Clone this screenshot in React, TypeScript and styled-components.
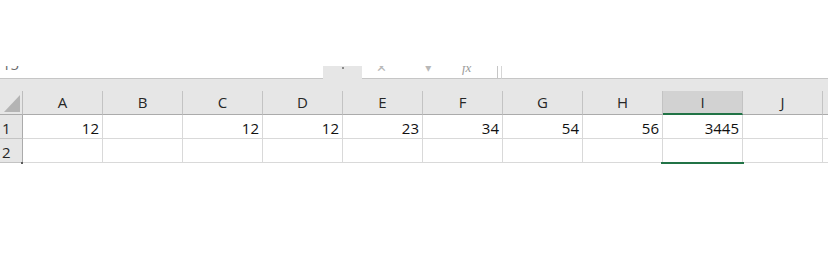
import styled, { createGlobalStyle } from "styled-components";

const GlobalStyle = createGlobalStyle`
  html, body {
    margin: 0;
    padding: 0;
    background: #ffffff;
  }
  body {
    font-family: "Open Sans", "Liberation Sans", sans-serif;
  }
`;

const COLUMNS = ["A", "B", "C", "D", "E", "F", "G", "H", "I", "J"];
const SELECTED = "I";

const ROWS: { label: string; values: (number | null)[] }[] = [
  { label: "1", values: [12, null, 12, 12, 23, 34, 54, 56, 3445, null] },
  { label: "2", values: [null, null, null, null, null, null, null, null, null, null] },
];

const TEMPLATE = `23px repeat(${COLUMNS.length}, 80px) 5px`;

const Page = styled.div`
  width: 838px;
  height: 266px;
  padding-top: 66px;
  box-sizing: border-box;
  overflow: hidden;
  background: #ffffff;
`;

const FormulaStrip = styled.div`
  display: flex;
  width: 828px;
  height: 13px;
  overflow: hidden;
`;

const NameBox = styled.div`
  width: 323px;
  height: 13px;
  box-sizing: border-box;
  border-bottom: 1px solid #c6c6c6;
  padding-left: 2px;
  overflow: hidden;
`;

const ClippedText = styled.span<{ $shift: number; $color: string }>`
  display: block;
  font-size: 15px;
  line-height: 15px;
  color: ${(p) => p.$color};
  margin-top: ${(p) => p.$shift}px;
`;

const SplitTab = styled.div`
  width: 39px;
  height: 13px;
  background: #e6e6e6;
  display: flex;
  justify-content: center;
`;

const Dot = styled.span`
  width: 2px;
  height: 2px;
  margin-top: 1px;
  background: #8a8a8a;
`;

const FxArea = styled.div`
  width: 136px;
  height: 13px;
  box-sizing: border-box;
  border-bottom: 1px solid #c6c6c6;
  border-right: 1px solid #c6c6c6;
  display: flex;
  overflow: hidden;
`;

const FxGlyph = styled.span<{ $left: number }>`
  display: inline-block;
  margin-left: ${(p) => p.$left}px;
  font-size: 13px;
  line-height: 13px;
  margin-top: -5px;
  color: #b8b8b8;
`;

const FxItalic = styled(FxGlyph)`
  font-family: "Liberation Serif", serif;
  font-style: italic;
  color: #9a9a9a;
`;

const FxGap = styled.div`
  width: 3px;
  height: 13px;
  box-sizing: border-box;
  border-bottom: 1px solid #c6c6c6;
`;

const FxTail = styled.div`
  flex: 1;
  height: 13px;
  box-sizing: border-box;
  border-bottom: 1px solid #c6c6c6;
  border-left: 1px solid #d6d6d6;
`;

const Band = styled.div`
  width: 828px;
  height: 12px;
  background: #e6e6e6;
`;

const Sheet = styled.div`
  display: grid;
  grid-template-columns: ${TEMPLATE};
  grid-auto-rows: 24px;
  width: 828px;
  font-size: 15px;
  line-height: 15px;
`;

const Corner = styled.div`
  position: relative;
  background: #e6e6e6;
  box-sizing: border-box;
  border-right: 1px solid #bdbdbd;
  border-bottom: 1px solid #ababab;
`;

const CornerTriangle = styled.svg`
  position: absolute;
  right: 2px;
  bottom: 2px;
`;

const ColHeader = styled.div<{ $selected?: boolean }>`
  background: ${(p) => (p.$selected ? "#d2d2d2" : "#e6e6e6")};
  box-sizing: border-box;
  border-right: 1px solid #c3c3c3;
  border-bottom: ${(p) => (p.$selected ? "2px solid #217346" : "1px solid #ababab")};
  color: #262626;
  display: flex;
  align-items: center;
  justify-content: center;
  padding-top: ${(p) => (p.$selected ? "1px" : "0")};
`;

const EdgeHeader = styled.div`
  background: #e6e6e6;
  box-sizing: border-box;
  border-bottom: 1px solid #ababab;
`;

const RowHeader = styled.div`
  background: #e6e6e6;
  box-sizing: border-box;
  border-right: 1px solid #ababab;
  border-bottom: 1px solid #c3c3c3;
  color: #262626;
  display: flex;
  align-items: flex-end;
  padding: 0 0 2px 2px;
`;

const Cell = styled.div`
  box-sizing: border-box;
  border-right: 1px solid #d9d9d9;
  border-bottom: 1px solid #d9d9d9;
  color: #111111;
  display: flex;
  align-items: flex-end;
  justify-content: flex-end;
  padding: 0 3px 2px 0;
`;

const EdgeCell = styled.div`
  box-sizing: border-box;
  border-bottom: 1px solid #d9d9d9;
`;

const SelectionEdge = styled.div`
  display: grid;
  grid-template-columns: ${TEMPLATE};
  width: 828px;
  height: 2px;
  margin-top: -1px;
`;

const RowMark = styled.div`
  grid-column: 1;
  justify-self: end;
  width: 2px;
  background: #5a5a5a;
`;

const GreenEdge = styled.div<{ $col: number }>`
  grid-column: ${(p) => p.$col};
  margin: 0 -1px 0 -2px;
  background: #217346;
`;

export default function App() {
  const selectedIndex = COLUMNS.indexOf(SELECTED);
  return (
    <Page>
      <GlobalStyle />
      <FormulaStrip>
        <NameBox>
          <ClippedText $shift={-9} $color="#6a6a6a">
            15
          </ClippedText>
        </NameBox>
        <SplitTab>
          <Dot />
        </SplitTab>
        <FxArea>
          <FxGlyph $left={14}>✕</FxGlyph>
          <FxGlyph $left={38}>▾</FxGlyph>
          <FxItalic $left={30}>fx</FxItalic>
        </FxArea>
        <FxGap />
        <FxTail />
      </FormulaStrip>
      <Band />
      <Sheet>
        <Corner>
          <CornerTriangle width="16" height="17" viewBox="0 0 16 17">
            <polygon points="16,0 16,17 0,17" fill="#b4b4b4" />
          </CornerTriangle>
        </Corner>
        {COLUMNS.map((c) => (
          <ColHeader key={c} $selected={c === SELECTED}>
            {c}
          </ColHeader>
        ))}
        <EdgeHeader />
        {ROWS.map((row) => [
          <RowHeader key={row.label}>{row.label}</RowHeader>,
          ...row.values.map((v, i) => <Cell key={row.label + i}>{v ?? ""}</Cell>),
          <EdgeCell key={row.label + "edge"} />,
        ])}
      </Sheet>
      <SelectionEdge>
        <RowMark />
        <GreenEdge $col={selectedIndex + 2} />
      </SelectionEdge>
    </Page>
  );
}
